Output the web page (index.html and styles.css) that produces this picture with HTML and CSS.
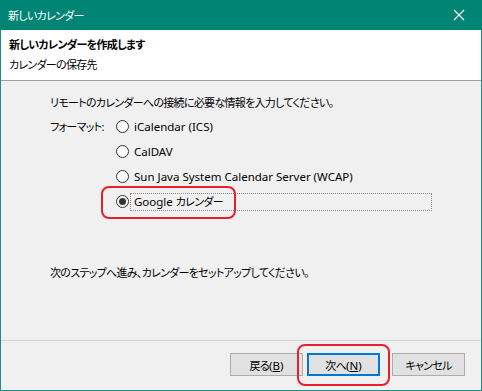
FILE: index.html
```html
<!DOCTYPE html>
<html lang="ja">
<head>
<meta charset="utf-8">
<link rel="stylesheet" href="styles.css">
</head>
<body>
<div class="window">
  <div class="titlebar">
    <span class="title jp">新しいカレンダー</span>
    <svg class="close" width="12" height="12" viewBox="0 0 12 12"><path d="M1 1 L11 11 M11 1 L1 11" stroke="#fff" stroke-width="1.1" fill="none"/></svg>
  </div>
  <div class="header">
    <div class="h-title jp">新しいカレンダーを作成します</div>
    <div class="h-sub jp">カレンダーの保存先</div>
  </div>
  <div class="content">
    <p class="intro jp">リモートのカレンダーへの接続に必要な情報を入力してください。</p>
    <div class="format">
      <div class="flabel jp">フォーマット:</div>
      <div class="options">
        <div class="opt"><span class="radio"></span><span class="olabel">iCalendar (ICS)</span></div>
        <div class="opt"><span class="radio"></span><span class="olabel">CalDAV</span></div>
        <div class="opt"><span class="radio"></span><span class="olabel">Sun Java System Calendar Server (WCAP)</span></div>
        <div class="opt selected"><span class="radio"></span><span class="olabel focus">Google <span class="jp">カレンダー</span></span></div>
      </div>
    </div>
    <p class="next-text jp">次のステップへ進み、カレンダーをセットアップしてください。</p>
    <div class="mark mark-google"></div>
  </div>
  <div class="footer">
    <button class="btn"><span class="jp">戻る</span>(<u>B</u>)</button>
    <button class="btn default"><span class="jp">次へ</span>(<u>N</u>)</button>
    <button class="btn cancel"><span class="jp">キャンセル</span></button>
    <div class="mark mark-next"></div>
  </div>
</div>
</body>
</html>
```
FILE: styles.css
```css
* { box-sizing: border-box; }
html, body { margin: 0; padding: 0; background: #fff; }
body {
  font-family: "Noto Sans", "Noto Sans CJK JP", sans-serif;
  font-size: 11.5px;
  color: #000;
  font-feature-settings: "palt";
}
.jp {
  font-size: 11px;
  letter-spacing: -0.7px;
}
.window {
  width: 482px;
  height: 391px;
  border: 1px solid #1a8f80;
  border-top: none;
  display: flex;
  flex-direction: column;
  background: #f0f0f0;
}
.titlebar {
  height: 30px;
  margin: 0 -1px;
  background: #008575;
  color: #fff;
  display: flex;
  align-items: center;
  justify-content: space-between;
  padding: 0 12px 0 8px;
  flex: none;
}
.close { display: block; margin-right: 5px; }
.header {
  flex: none;
  background: #fff;
  padding: 5px 8px 5px 8px;
  border-bottom: 1px solid #a0a0a0;
}
.h-title { line-height: 20px; font-weight: bold; }
.h-sub { line-height: 20px; }
.content {
  position: relative;
  flex: 1;
  padding: 12px 0 0 49px;
  border-bottom: 1px solid #d5d5d5;
}
.intro { margin: 0; line-height: 20px; }
.format {
  display: grid;
  grid-template-columns: 66px 1fr;
  margin-top: 1px;
}
.flabel { line-height: 25px; }
.options { display: flex; flex-direction: column; }
.opt { height: 25px; display: flex; align-items: center; }
.radio {
  width: 13px; height: 13px;
  border: 1px solid #333;
  border-radius: 50%;
  background: #fff;
  margin-right: 1px;
  flex: none;
  position: relative;
}
.selected .radio::after {
  content: "";
  position: absolute;
  left: 2px; top: 2px;
  width: 7px; height: 7px;
  border-radius: 50%;
  background: #333;
}
.olabel {
  border: 1px solid transparent;
  padding: 0 3px;
  line-height: 16px;
}
.olabel.focus {
  border: 1px dotted #888;
  width: 302px;
}
.next-text { margin: 49px 0 0; line-height: 20px; }
.footer {
  position: relative;
  flex: none;
  height: 49px;
  display: flex;
  justify-content: flex-end;
  align-items: flex-start;
  padding: 12px 16px 0 0;
}
.btn {
  font: inherit;
  width: 73px;
  height: 23px;
  background: #e1e1e1;
  border: 1px solid #adadad;
  padding: 0;
  color: #000;
  margin-left: 4px;
}
.btn.default { border-color: #0078d7; box-shadow: inset 0 0 0 1px #0078d7; }
.btn.cancel { margin-left: 12px; }
.mark {
  position: absolute;
  border: 2px solid #e8202a;
  border-radius: 8px;
}
.mark-google { left: 100px; top: 105px; width: 135px; height: 33px; }
.mark-next { left: 296px; top: 3px; width: 93px; height: 42px; }
```
